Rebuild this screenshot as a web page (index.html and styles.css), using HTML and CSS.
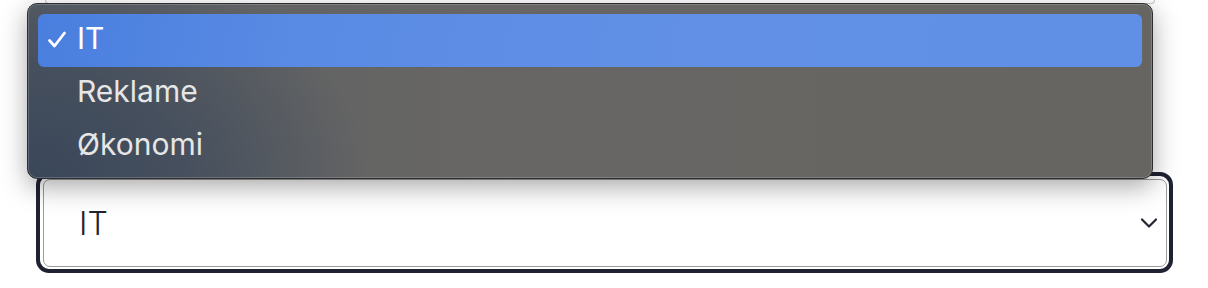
FILE: index.html
```html
<!DOCTYPE html>
<html lang="da">
<head>
<meta charset="utf-8">
<title>Kategori</title>
<link rel="stylesheet" href="styles.css">
</head>
<body>
<div class="prev"></div>
<div class="field">
  <div class="ring">
    <div class="select">
      <span class="value">IT</span>
      <svg class="chevron" width="18" height="12" viewBox="0 0 18 12"><path d="M2 2.5 L9 9.5 L16 2.5" fill="none" stroke="#25252f" stroke-width="2.2" stroke-linecap="round" stroke-linejoin="round"/></svg>
    </div>
  </div>
  <!-- Native popup menu, open over the select -->
  <ul class="menu">
    <li class="selected">
      <svg class="check" width="20" height="18" viewBox="0 0 20 18"><path d="M2.5 9.5 L7.5 15 L17.5 2" fill="none" stroke="#fff" stroke-width="2.8" stroke-linecap="round" stroke-linejoin="round"/></svg>
      IT
    </li>
    <li>Reklame</li>
    <li>Økonomi</li>
  </ul>
</div>
</body>
</html>
```

FILE: styles.css
```css
body {
  margin: 0;
  background: #fff;
  font-family: "Inter", "Noto Sans", sans-serif;
}
/* Bottom edge of the field above */
.prev {
  height: 3px;
  margin: 0 53px 0 45px;
  border: 1px solid #c6c6c6;
  border-top: none;
  border-radius: 0 0 6px 6px;
}
.field {
  position: relative;
}
/* Focus ring */
.ring {
  margin: 168px 35px 0 36px;
  border: 4px solid #1f2232;
  border-radius: 13px;
  padding: 3px 2px 2px 3px;
}
.select {
  height: 86px;
  border: 1.5px solid #9b9b9b;
  border-radius: 7px;
  display: flex;
  align-items: center;
  justify-content: space-between;
  padding: 0 8px 0 35px;
}
.value {
  font-size: 32px;
  font-weight: 300;
  color: #23232e;
}
/* Popup list */
.menu {
  position: absolute;
  left: 27px;
  top: -169px;
  width: 1104px;
  margin: 0;
  padding: 10px 10px 5px 10px;
  list-style: none;
  border: 1px solid #2e2e30;
  border-radius: 10px;
  box-shadow: inset 0 0 0 1px rgba(255, 255, 255, 0.18), 0 8px 26px rgba(0, 0, 0, 0.34);
  background:
    radial-gradient(ellipse 340px 230px at 0% 100%, #3a475a 0%, rgba(58, 71, 90, 0.7) 45%, rgba(58, 71, 90, 0) 100%),
    linear-gradient(90deg, #5d6064 0%, #676664 40%, #666562 100%);
}
.menu li {
  height: 53px;
  box-sizing: border-box;
  padding: 0 0 5px 39px;
  display: flex;
  align-items: center;
  position: relative;
  font-size: 30px;
  color: #e6e6e6;
  border-radius: 6px;
}
.menu li.selected {
  color: #fff;
  background: linear-gradient(100deg, #4a7fdf 0%, #5a8be4 25%, #6190e6 60%, #6090e5 100%);
}
.check {
  position: absolute;
  left: 9px;
  top: 17px;
}
```
